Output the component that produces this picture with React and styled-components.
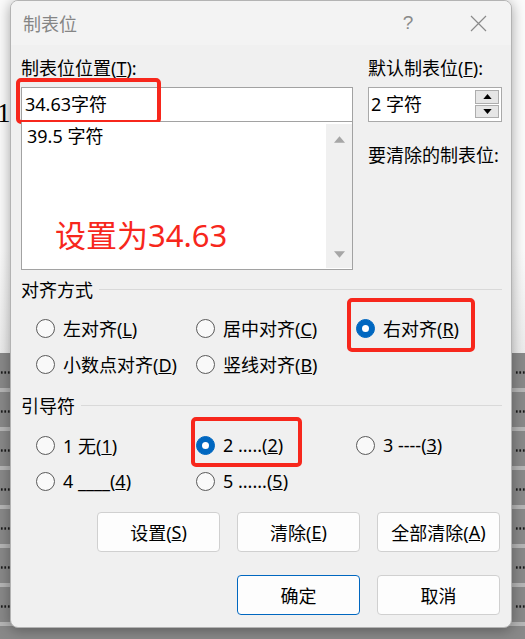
import React from 'react';
import styled, { createGlobalStyle } from 'styled-components';

const GlobalStyle = createGlobalStyle`
  html, body {
    margin: 0;
    padding: 0;
  }
  body {
    background: #fff;
    font-family: "Noto Sans", "Noto Sans CJK SC", sans-serif;
  }
`;

const RED = '#f7271c';
const BLUE = '#0067c0';

const Page = styled.div`
    height: 639px;
    overflow: hidden;
    position: relative;
    width: 525px;
`;

// document behind the dialog

const Backdrop = styled.div`
    display: flex;
    flex-direction: column;
    height: 100%;
`;

const PaperTop = styled.div`
    background: linear-gradient(#fbfbfb 0 250px, #ececec 353px);
    flex: none;
    height: 353px;
    padding-top: 98px;
    box-sizing: border-box;
`;

const PageNum = styled.span`
    display: block;
    font-family: "Liberation Serif", serif;
    font-size: 27px;
    line-height: 30px;
    margin-left: -3px;
`;

const DocRow = styled.div`
    align-items: flex-start;
    background: linear-gradient(#898989 0 35px, #b6b6b6 35px 39px);
    display: flex;
    flex: none;
    height: 39px;
    justify-content: space-between;
    padding-top: 18px;
    box-sizing: border-box;
`;

const Dots = styled.span`
    background: radial-gradient(circle, #1a1a1a 0 1px, transparent 1.3px) 0 0 / 3.5px 3px;
    display: block;
    height: 3px;
    width: 10px;
`;

// dialog

const Dialog = styled.div`
    background: #f0f0f0;
    border: 1px solid #b3b3b3;
    border-radius: 8px;
    box-shadow: 0 2px 14px rgba(0, 0, 0, 0.35);
    box-sizing: border-box;
    display: flex;
    flex-direction: column;
    height: 628px;
    left: 10px;
    overflow: hidden;
    position: absolute;
    top: 0;
    width: 502px;
`;

const TitleBar = styled.div`
    align-items: center;
    background: #f3f3f3;
    display: flex;
    flex: none;
    height: 44px;
    padding: 0 10px 0 12px;
`;

const Title = styled.span`
    color: #858585;
    font-size: 18px;
`;

const TitleButton = styled.span`
    align-items: center;
    color: #8a8a8a;
    display: flex;
    font-family: "Liberation Sans", sans-serif;
    font-size: 19px;
    height: 44px;
    justify-content: center;
    margin-left: ${props => props.$first ? 'auto' : '24px'};
    width: 46px;
`;

const Body = styled.div`
    display: flex;
    flex-direction: column;
    padding: 13px 9px 0 10px;
`;

const TopGrid = styled.div`
    display: grid;
    grid-template-columns: 332px 134px;
    column-gap: 15px;
`;

const Column = styled.div`
    display: flex;
    flex-direction: column;
`;

const Label = styled.div`
    font-size: 18px;
    height: 20px;
    line-height: 20px;
    margin-top: ${props => props.$gap || 0}px;
    white-space: nowrap;
`;

const Field = styled.div`
    margin-top: 9px;
    position: relative;
`;

const TextBox = styled.div`
    background: #fff;
    border: 1px solid #a2a2a2;
    box-sizing: border-box;
    font-size: 18px;
    height: 35px;
    line-height: 33px;
    padding-left: 3px;
`;

const Mark = styled.div`
    border: 4px solid ${RED};
    border-radius: 5px;
    box-sizing: border-box;
    pointer-events: none;
    position: absolute;
`;

const ListBox = styled.div`
    background: #fff;
    border: 1px solid #a2a2a2;
    border-top: none;
    box-sizing: border-box;
    display: flex;
    height: 148px;
    position: relative;
`;

const Items = styled.div`
    flex: 1;
    font-size: 18px;
    line-height: 22px;
    padding: 3px 5px;
`;

const ScrollBar = styled.div`
    align-items: center;
    background: #f0f0f0;
    display: flex;
    flex-direction: column;
    justify-content: space-between;
    margin: 2px 0 1px;
    padding: 12px 0 10px;
    width: 26px;
`;

const Note = styled.div`
    color: ${RED};
    font-size: 31px;
    left: 33px;
    line-height: 36px;
    position: absolute;
    top: 95px;
`;

const SpinBox = styled.div`
    background: #fff;
    border: 1px solid #a9a9a9;
    box-sizing: border-box;
    display: flex;
    height: 35px;
    margin-top: 9px;
`;

const SpinText = styled.div`
    flex: 1;
    font-size: 18px;
    line-height: 33px;
    padding-left: 2px;
`;

const SpinButtons = styled.div`
    display: flex;
    flex-direction: column;
    gap: 1px;
    padding: 2px 2px 3px 0;
`;

const SpinButton = styled.div`
    align-items: center;
    background: #e6e6e6;
    border: 1px solid #adadad;
    box-sizing: border-box;
    display: flex;
    flex: 1;
    justify-content: center;
    width: 24px;
`;

const SectionHead = styled.div`
    align-items: center;
    display: flex;
    font-size: 18px;
    gap: 6px;
    height: 20px;
    line-height: 20px;
    margin-top: ${props => props.$gap}px;
`;

const Rule = styled.div`
    background: #d9d9d9;
    flex: 1;
    height: 1px;
    margin-top: -2px;
`;

const RadioGrid = styled.div`
    display: grid;
    grid-auto-rows: 36px;
    grid-template-columns: 160px 160px 1fr;
    margin-top: ${props => props.$gap}px;
    padding-left: 15px;
`;

const RadioItem = styled.div`
    align-items: center;
    display: flex;
    font-size: 18px;
    gap: 8px;
    position: relative;
    white-space: nowrap;
`;

const Circle = styled.span`
    align-items: center;
    background: ${props => props.$on ? BLUE : '#f9f9f9'};
    border: 1px solid ${props => props.$on ? BLUE : '#5a5a5a'};
    border-radius: 50%;
    box-sizing: border-box;
    display: flex;
    flex: none;
    height: 19px;
    justify-content: center;
    width: 19px;

    &::after {
        background: #fff;
        border-radius: 50%;
        content: '';
        display: ${props => props.$on ? 'block' : 'none'};
        height: 7px;
        width: 7px;
    }
`;

const ButtonRow = styled.div`
    display: flex;
    gap: 17px;
    justify-content: flex-end;
    margin-right: 2px;
    margin-top: ${props => props.$gap}px;
`;

const Button = styled.div`
    align-items: center;
    background: #fdfdfd;
    border: 1px solid ${props => props.$primary ? BLUE : '#d0d0d0'};
    border-radius: 4px;
    box-sizing: border-box;
    display: flex;
    font-size: 18px;
    height: 40px;
    justify-content: center;
    width: 123px;
`;

const Arrow = ({ up, color = '#000', w = 9, h = 5 }) => (
    <svg width={w} height={h} viewBox="0 0 10 6">
        <polygon points={up ? '0,6 10,6 5,0' : '0,0 10,0 5,6'} fill={color} />
    </svg>
);

const CloseIcon = () => (
    <svg width="17" height="17" viewBox="0 0 17 17">
        <path d="M1 1 L16 16 M16 1 L1 16" stroke="#8a8a8a" strokeWidth="1.2" fill="none" />
    </svg>
);

const Radio = ({ on, mark, children }) => (
    <RadioItem>
        <Circle $on={on} />
        <span>{children}</span>
        {mark && <Mark style={mark} />}
    </RadioItem>
);

const App = () => {
    const rows = Array.from({ length: 8 });

    return (
        <Page>
            <GlobalStyle />

            <Backdrop>
                <PaperTop>
                    <PageNum>1</PageNum>
                </PaperTop>
                {rows.map((_, i) => (
                    <DocRow key={i}>
                        <Dots />
                        <Dots />
                    </DocRow>
                ))}
            </Backdrop>

            <Dialog>
                <TitleBar>
                    <Title>制表位</Title>
                    <TitleButton $first>?</TitleButton>
                    <TitleButton><CloseIcon /></TitleButton>
                </TitleBar>

                <Body>
                    <TopGrid>
                        <Column>
                            <Label>制表位位置(<u>T</u>):</Label>
                            <Field>
                                <TextBox>34.63字符</TextBox>
                                <Mark style={{ left: -5, top: -9, width: 145, height: 46 }} />
                            </Field>
                            <ListBox>
                                <Items>39.5 字符</Items>
                                <ScrollBar>
                                    <Arrow up color="#a6a6a6" w={11} h={7} />
                                    <Arrow color="#a6a6a6" w={11} h={7} />
                                </ScrollBar>
                                <Note>设置为34.63</Note>
                            </ListBox>
                        </Column>

                        <Column>
                            <Label>默认制表位(<u>F</u>):</Label>
                            <SpinBox>
                                <SpinText>2 字符</SpinText>
                                <SpinButtons>
                                    <SpinButton><Arrow up /></SpinButton>
                                    <SpinButton><Arrow /></SpinButton>
                                </SpinButtons>
                            </SpinBox>
                            <Label $gap={23}>要清除的制表位:</Label>
                        </Column>
                    </TopGrid>

                    <SectionHead $gap={10}>对齐方式<Rule /></SectionHead>
                    <RadioGrid $gap={10}>
                        <Radio>左对齐(<u>L</u>)</Radio>
                        <Radio>居中对齐(<u>C</u>)</Radio>
                        <Radio on mark={{ left: -9, top: -12, width: 128, height: 54 }}>右对齐(<u>R</u>)</Radio>
                        <Radio>小数点对齐(<u>D</u>)</Radio>
                        <Radio>竖线对齐(<u>B</u>)</Radio>
                    </RadioGrid>

                    <SectionHead $gap={14}>引导符<Rule /></SectionHead>
                    <RadioGrid $gap={11}>
                        <Radio>1 无(<u>1</u>)</Radio>
                        <Radio on mark={{ left: -5, top: -10, width: 111, height: 50 }}>2 .....(<u>2</u>)</Radio>
                        <Radio>3 ----(<u>3</u>)</Radio>
                        <Radio>4 ____(<u>4</u>)</Radio>
                        <Radio>5 ......(<u>5</u>)</Radio>
                    </RadioGrid>

                    <ButtonRow $gap={13}>
                        <Button>设置(<u>S</u>)</Button>
                        <Button>清除(<u>E</u>)</Button>
                        <Button>全部清除(<u>A</u>)</Button>
                    </ButtonRow>
                    <ButtonRow $gap={23}>
                        <Button $primary>确定</Button>
                        <Button>取消</Button>
                    </ButtonRow>
                </Body>
            </Dialog>
        </Page>
    );
};

export default App;
